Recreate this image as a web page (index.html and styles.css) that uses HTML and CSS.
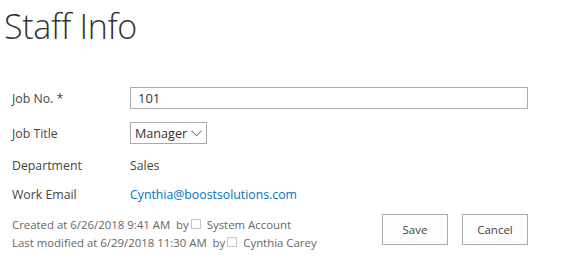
FILE: index.html
```html
<!DOCTYPE html>
<html lang="en">
<head>
    <meta charset="UTF-8">
    <title>Staff Info</title>
    <link rel="stylesheet" href="styles.css">
</head>
<body>
    <h1 class="page-title">Staff Info</h1>
    <form class="form">
        <div class="row">
            <label class="label" for="job_no">Job No. <span class="req">*</span></label>
            <input class="text-input" type="text" id="job_no" value="101">
        </div>
        <div class="row select-row">
            <label class="label" for="job_title">Job Title</label>
            <div class="select">
                <span>Manager</span>
                <svg class="chev" width="11" height="7" viewBox="0 0 11 7"><path d="M0.5 0.8l5 5L10.5 0.8" fill="none" stroke="#555" stroke-width="1"/></svg>
            </div>
        </div>
        <div class="row text-row">
            <span class="label">Department</span>
            <span class="value">Sales</span>
        </div>
        <div class="row text-row">
            <span class="label">Work Email</span>
            <a class="value link" href="#">Cynthia@boostsolutions.com</a>
        </div>
        <div class="footer">
            <div class="meta">
                <div>Created at 6/26/2018 9:41 AM &nbsp;by<span class="box"></span> System Account</div>
                <div>Last modified at 6/29/2018 11:30 AM &nbsp;by<span class="box"></span> Cynthia Carey</div>
            </div>
            <div class="buttons">
                <button type="button" class="btn">Save</button>
                <button type="button" class="btn">Cancel</button>
            </div>
        </div>
    </form>
</body>
</html>
```

FILE: styles.css
```css
body { margin: 0; background: #fff; color: #444; font-family: "Open Sans", sans-serif; font-size: 12.3px; }
.page-title { margin: 0; padding: 5px 0 0 4px; font-size: 34px; font-weight: 300; color: #333; line-height: 42px; letter-spacing: -0.3px; }
.form { padding: 40px 0 0 12px; width: 516px; }
.row { display: flex; align-items: center; height: 22px; margin-bottom: 13px; }
.select-row { margin-bottom: 11px; }
.text-row { height: 20px; margin-bottom: 9px; }
.label { width: 118px; flex: none; color: #444; }
.req { color: #444; }
.text-input { flex: 1; height: 22px; box-sizing: border-box; border: 1px solid #ababab; padding: 0 7px; font: inherit; font-size: 13px; color: #333; outline: none; }
.select { display: flex; align-items: center; height: 22px; box-sizing: border-box; border: 1px solid #ababab; padding: 0 4px 0 4px; width: 77px; color: #333; font-size: 12.6px; }
.chev { flex: none; margin-left: auto; }
.value { color: #444; }
.link { color: #0072c6; text-decoration: none; }
.footer { display: flex; justify-content: space-between; align-items: flex-start; margin-top: 10px; }
.meta { font-size: 11.4px; color: #666; line-height: 18px; padding-top: 2px; }
.box { display: inline-block; width: 8px; height: 8px; border: 1px solid #c6c6c6; margin: 0 3px 0 2px; }
.buttons { display: flex; gap: 14px; }
.btn { width: 66px; height: 31px; border: 1px solid #ababab; background: #fdfdfd; font: inherit; font-size: 11.5px; color: #444; padding: 0; }
```
